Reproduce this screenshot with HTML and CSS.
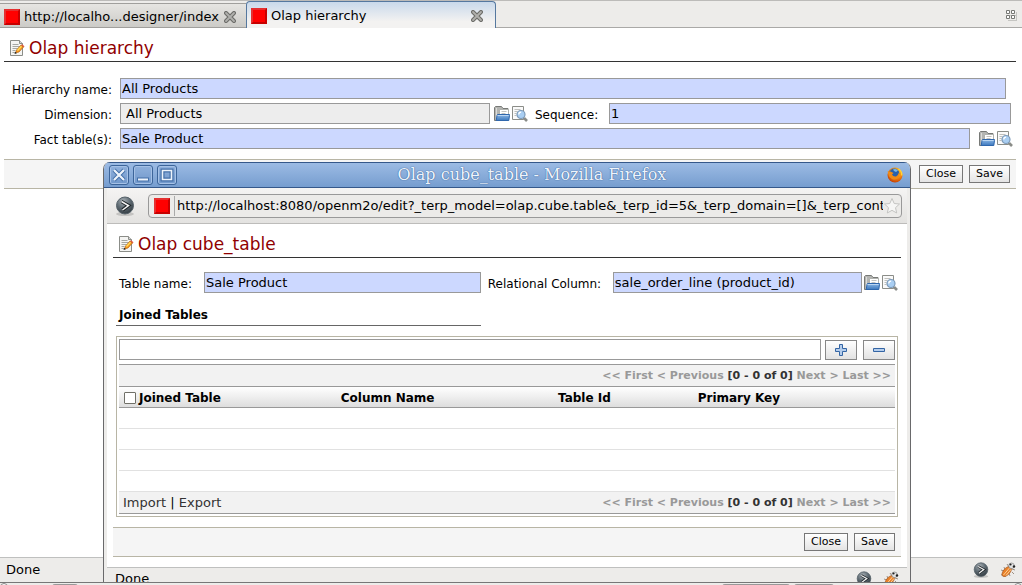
FILE: index.html
```html
<!DOCTYPE html>
<html lang="en">
<head>
<meta charset="utf-8">
<title>Olap hierarchy</title>
<link rel="stylesheet" href="styles.css">
</head>
<body>
<svg class="sprite" aria-hidden="true">
  <defs>
    <linearGradient id="gBlue" x1="0" y1="0" x2="0" y2="1"><stop offset="0" stop-color="#8db8e6"/><stop offset="1" stop-color="#3c78bd"/></linearGradient>
    <radialGradient id="gBall" cx=".4" cy=".25" r=".8"><stop offset="0" stop-color="#a8b0b5"/><stop offset=".5" stop-color="#5f6b73"/><stop offset="1" stop-color="#30383e"/></radialGradient>
    <radialGradient id="gFox" cx=".6" cy=".3" r=".8"><stop offset="0" stop-color="#ffd32a"/><stop offset=".5" stop-color="#f5870e"/><stop offset="1" stop-color="#b52c06"/></radialGradient>
  </defs>
  <symbol id="edit" viewBox="0 0 16 16">
    <path d="M1.500.5h9l3 3v12h-12z" fill="#f4f4f2" stroke="#8b8d88"/>
    <path d="M10.500.5v3h3" fill="#d6d6d3" stroke="#8b8d88"/>
    <path d="M3.500 4.500h6M3.500 6.500h7M3.500 8.500h5M3.500 10.500h3M3.500 12.500h4" stroke="#a5a7a3"/>
    <path d="M6.500 13l1-3 4.500-5 2.500 2-4.500 5z" fill="#f7941d" stroke="#a85b0b" stroke-width=".6"/>
    <path d="M8.500 10.500l4-4.200" stroke="#ffe05a" stroke-width="1.300"/>
    <path d="M12 5l1-.8 2.500 2-.8 1z" fill="#e0553a"/>
    <path d="M5.500 14l.8-2.300 1.600 1.500z" fill="#222"/>
  </symbol>
  <symbol id="folder" viewBox="0 0 16 16">
    <path d="M.5 14.500V1.500L1.500.5h6l1.500 2h5v12z" fill="#b4b5b2" stroke="#777976"/>
    <path d="M2.500 2v11" stroke="#dcdcd9"/>
    <path d="M5.500 10V3.500h9V10z" fill="#fff" stroke="#b0b2ae"/>
    <path d="M7.500 5.500h5M7.500 7.500h4" stroke="#c4c4c1"/>
    <path d="M3 9.500l.5-1h12v1l-.7 5H2.200z" fill="url(#gBlue)" stroke="#2f67ad"/>
    <path d="M3.500 9.500h11" stroke="#b9d5f2"/>
  </symbol>
  <symbol id="search" viewBox="0 0 16 16">
    <path d="M.5.5h11v13H.5z" fill="#fafafa" stroke="#8b8d88"/>
    <path d="M2.500 3.500h6M2.500 5.500h3M2.500 7.500h2M2.500 9.500h2" stroke="#bfc0bd"/>
    <path d="M12 12l3 3" stroke="#8a8c88" stroke-width="2.600"/>
    <circle cx="9" cy="8.500" r="4" fill="#a9cef2" stroke="#7d9ab8" stroke-width="1.200"/>
    <path d="M6.800 8.500q0-2.300 2.300-2.300" stroke="#fff" fill="none" stroke-width="1.300"/>
  </symbol>
  <symbol id="close" viewBox="0 0 12 12">
    <path d="M2 2l8 8M10 2l-8 8" stroke="#6b6b68" stroke-width="4" stroke-linecap="round"/>
    <path d="M2 2l8 8M10 2l-8 8" stroke="#b0b0ad" stroke-width="1.800" stroke-linecap="round"/>
  </symbol>
  <symbol id="ball" viewBox="0 0 20 20">
    <ellipse cx="10" cy="18" rx="9" ry="2" fill="#c4c3c1"/>
    <circle cx="10" cy="9.500" r="8.500" fill="url(#gBall)" stroke="#56626a"/>
    <path d="M6.500 5.500l7 4-6 4.500" fill="none" stroke="#20262a" stroke-width="3.500"/>
    <path d="M6.500 5.500l7 4-6 4.500" fill="none" stroke="#f3f4f4" stroke-width="1.500"/>
  </symbol>
  <symbol id="bug" viewBox="0 0 16 16">
    <path d="M4 5l1 3M1 8l3 1M1 13l3-1M5 15l1-2M10 14l-1-3M12 10l2 2M7 2l2 3M12 7l3 1" stroke="#8a7a6a" stroke-width=".8" fill="none"/>
    <ellipse cx="6.800" cy="9.500" rx="3.300" ry="6.200" transform="rotate(42 6.800 9.500)" fill="#e8812a" stroke="#a4521a" stroke-width=".6"/>
    <path d="M3.500 13l6-7M6 13.500l5-6" stroke="#ffd7a0" stroke-width=".9"/>
    <circle cx="11.500" cy="3.800" r="2.800" fill="#e2e3e3" stroke="#777" stroke-width=".6"/>
    <circle cx="10.500" cy="2.500" r="1.100" fill="#222"/><circle cx="14" cy="4.500" r="1.200" fill="#222"/>
  </symbol>
  <symbol id="firefox" viewBox="0 0 16 16">
    <circle cx="8" cy="8" r="7.500" fill="url(#gFox)"/>
    <circle cx="7.300" cy="6.500" r="5" fill="#2a61ab"/>
    <path d="M6 2.500q3-1.500 5 1l-2 1.500-2-1z" fill="#78b7e8"/>
    <path d="M.8 4Q2 5 3.500 4.500L6.500 6 5 7.500q1 2.500 4 2 2.500-1 2.500-4 1.500 3 .2 5Q9 13.500 5 12 .5 9 .8 4z" fill="#f08a16"/>
    <path d="M11.500 2q3.500 2 3.300 6.500" stroke="#ffd53a" stroke-width="1.400" fill="none"/>
  </symbol>
</svg>

<div class="browser">
  <nav class="tabs">
    <div class="tab tab-back"><span class="favicon"></span><span class="tab-name">http://localho...designer/index</span><button class="plain" aria-label="Close tab"><svg class="x"><use href="#close"/></svg></button></div>
    <div class="tab tab-active"><span class="favicon"></span><span class="tab-name">Olap hierarchy</span><button class="plain" aria-label="Close tab"><svg class="x"><use href="#close"/></svg></button></div>
    <button class="plain tab-list" aria-label="List tabs"><svg width="11" height="11" viewBox="0 0 11 11"><path d="M2 5.500h9M2 10.500h9M10.500 2v8" stroke="#c5c5c2"/><path d="M.5.5h3v3h-3zM5.500.5h3v3h-3zM.5 5.500h3v3h-3zM5.500 5.500h3v3h-3z" fill="#fff" stroke="#777875"/></svg></button>
  </nav>
  <main class="page">
    <h1 class="title"><svg class="icon"><use href="#edit"/></svg>Olap hierarchy</h1>
    <form class="form">
      <div class="row row-name"><label for="hname">Hierarchy name:</label><input id="hname" class="field" value="All Products"></div>
      <div class="row"><label for="dim">Dimension:</label><input id="dim" class="field readonly" value="All Products" readonly>
        <span class="tools"><button type="button" class="plain" aria-label="Open dimension"><svg class="icon"><use href="#folder"/></svg></button><button type="button" class="plain" aria-label="Search dimension"><svg class="icon"><use href="#search"/></svg></button></span>
        <label class="inner" for="seq">Sequence:</label><input id="seq" class="field seq" value="1"></div>
      <div class="row row-fact"><label for="fact">Fact table(s):</label><input id="fact" class="field" value="Sale Product">
        <span class="tools"><button type="button" class="plain" aria-label="Open fact table"><svg class="icon"><use href="#folder"/></svg></button><button type="button" class="plain" aria-label="Search fact table"><svg class="icon"><use href="#search"/></svg></button></span></div>
    </form>
    <div class="actions"><button class="btn">Close</button><button class="btn">Save</button></div>
  </main>
  <footer class="status"><span>Done</span><span class="status-icons"><svg class="icon"><use href="#ball"/></svg><svg class="icon"><use href="#bug"/></svg></span></footer>
  <div class="taskbar"><i class="knob"></i><i class="task task-a"></i><i class="task task-b"></i><i class="task task-c"></i><i class="knob"></i></div>
</div>

<section class="popup" aria-label="Olap cube_table">
  <header class="titlebar">
    <button class="win" aria-label="Close"><svg viewBox="0 0 18 18"><path d="M4 4l10 10M14 4L4 14" stroke="#436fa8" stroke-width="4"/><path d="M4 4l10 10M14 4L4 14" stroke="#edf3fb" stroke-width="2.200"/></svg></button>
    <button class="win" aria-label="Minimize"><svg viewBox="0 0 18 18"><path d="M3 11.500h12v4H3z" fill="#436fa8"/><path d="M4 13.500h10" stroke="#edf3fb" stroke-width="2"/></svg></button>
    <button class="win" aria-label="Maximize"><svg viewBox="0 0 18 18"><path d="M4.500 4.500h9v9h-9z" fill="none" stroke="#436fa8" stroke-width="4"/><path d="M4.500 4.500h9v9h-9z" fill="none" stroke="#edf3fb" stroke-width="1.600"/></svg></button>
    <h2 class="win-title">Olap cube_table - Mozilla Firefox</h2>
    <svg class="icon"><use href="#firefox"/></svg>
  </header>
  <div class="inside">
    <div class="location">
      <svg class="globe"><use href="#ball"/></svg>
      <div class="urlbox"><span class="favicon"></span><input class="url" aria-label="Address" value="http://localhost:8080/openm2o/edit?_terp_model=olap.cube.table&amp;_terp_id=5&amp;_terp_domain=[]&amp;_terp_cont">
        <button class="plain" aria-label="Bookmark"><svg width="18" height="18" viewBox="0 0 18 18"><path d="M9 1.500l2.200 5 5.300.5-4 3.700 1.200 5.300L9 13.300 4.300 16l1.200-5.300-4-3.700 5.300-.5z" fill="#f6f6f5" stroke="#c4c4c2"/></svg></button></div>
    </div>
    <div class="dialog">
      <h1 class="title"><svg class="icon"><use href="#edit"/></svg>Olap cube_table</h1>
      <form class="pair">
        <label class="for-name" for="tname">Table name:</label><input id="tname" class="field" value="Sale Product">
        <label class="for-rel" for="rel">Relational Column:</label><input id="rel" class="field rel" value="sale_order_line (product_id)">
        <span class="tools"><button type="button" class="plain" aria-label="Open column"><svg class="icon"><use href="#folder"/></svg></button><button type="button" class="plain" aria-label="Search column"><svg class="icon"><use href="#search"/></svg></button></span>
      </form>
      <h3 class="section">Joined Tables</h3>
      <div class="listbox">
        <div class="adder"><input class="field blank" aria-label="Joined table">
          <button class="sq" aria-label="Add"><svg width="14" height="14" viewBox="0 0 14 14"><path d="M5.500 1.500h3v4h4v3h-4v4h-3v-4h-4v-3h4z" fill="#b4cdec" stroke="#3465a4"/></svg></button>
          <button class="sq" aria-label="Remove"><svg width="14" height="14" viewBox="0 0 14 14"><path d="M1.500 5.500h11v3h-11z" fill="#b4cdec" stroke="#3465a4"/></svg></button></div>
        <div class="pager pager-top"><span class="pages">&lt;&lt; First &lt; Previous <b>[0 - 0 of 0]</b> Next &gt; Last &gt;&gt;</span></div>
        <table class="grid">
          <colgroup><col class="c-check"><col class="c-join"><col class="c-col"><col class="c-id"><col></colgroup>
          <thead><tr><th><input type="checkbox" class="check" aria-label="Select all"></th><th>Joined Table</th><th>Column Name</th><th>Table Id</th><th>Primary Key</th></tr></thead>
          <tbody><tr><td colspan="5"></td></tr><tr><td colspan="5"></td></tr><tr><td colspan="5"></td></tr><tr><td colspan="5"></td></tr></tbody>
        </table>
        <div class="pager"><span class="links"><a href="#">Import</a> | <a href="#">Export</a></span><span class="pages">&lt;&lt; First &lt; Previous <b>[0 - 0 of 0]</b> Next &gt; Last &gt;&gt;</span></div>
      </div>
      <div class="actions"><button class="btn">Close</button><button class="btn">Save</button></div>
    </div>
    <footer class="status"><span>Done</span><span class="status-icons"><svg class="icon"><use href="#ball"/></svg><svg class="icon"><use href="#bug"/></svg></span></footer>
  </div>
</section>
</body>
</html>
```
FILE: styles.css
```css
* { box-sizing: border-box; }
html, body { margin: 0; }
body { position: relative; overflow: hidden; background: #fff; color: #000; font: 13px/18px "DejaVu Sans", sans-serif; }
button, input { margin: 0; font: inherit; color: inherit; }
svg { display: block; }
.sprite { position: absolute; width: 0; height: 0; }
.icon { width: 16px; height: 16px; flex: none; }
.plain { padding: 0; border: 0; background: none; }

.browser { display: flex; flex-direction: column; min-height: 100vh; }
.tabs { display: flex; align-items: flex-end; height: 28px; background: #edecea; border-top: 1px solid #bcbbb9; box-shadow: inset 0 -1px #aaa9a7; }
.tab { display: flex; align-items: center; gap: 4px; padding: 2px 12px 0 4px; }
.tab-back { width: 246px; height: 25px; padding-right: 10px; background: linear-gradient(#e6e5e2, #cccbc7); border: 1px solid #a09f9c; border-width: 1px 0; }
.tab-active { width: 250px; height: 27px; background: linear-gradient(#c9d9eb, #f3f2f1 75%); border: 1px solid #55789f; border-bottom: 0; border-radius: 4px 4px 0 0; }
.tab-name { flex: 1; white-space: nowrap; }
.x { width: 12px; height: 12px; }
.favicon { flex: none; width: 16px; height: 16px; background: #f00; border: 2px solid #c80000; border-top-color: #e53030; border-left-color: #e53030; }
.tab-list { margin: 0 5px 7px auto; }

.page { flex: 1; padding: 9px 6px 0 4px; }
.title { display: flex; align-items: center; gap: 4px; margin: 0; padding: 0 4px 2px 5px; height: 25px; border-bottom: 1px solid #333; color: #900000; font-size: 17px; font-weight: 400; }
.form { display: flex; flex-direction: column; gap: 4px; padding: 16px 0 10px 4px; }
.row { display: flex; align-items: center; padding-right: 5px; }
.row-name { padding-right: 10px; }
.row-fact { padding-right: 3px; }
.row > label:first-child { width: 104px; margin-right: 8px; text-align: right; }
label { flex: none; padding-top: 2px; font-size: 12px; white-space: nowrap; }
.field { flex: 1; min-width: 0; height: 21px; padding: 0 1px 1px; border: 1px solid #999; background: #ccd8ff; }
.readonly { flex: 362; padding-left: 5px; background: #ededed; }
.seq { flex: 398; }
.tools { display: flex; gap: 2px; margin-left: 4px; flex: none; }
.row-fact .tools { margin-left: 9px; }
.inner { width: 66px; margin: 0 8px 0 7px; }
.actions { display: flex; align-items: center; justify-content: flex-end; gap: 6px; height: 30px; padding: 0 6px; background: #f5f5f5; border: 1px solid #b8b5a5; border-width: 1px 0; }
.btn { height: 18px; padding: 0 6px; border: 1px solid #777; background: linear-gradient(#fff, #e4e4e4); font-size: 11px; line-height: 16px; }

.status { display: flex; align-items: center; justify-content: space-between; height: 25px; padding: 0 6px; background: #edecea; border-top: 1px solid #bfc0bf; }
.status-icons { display: flex; gap: 11px; }
.taskbar { display: flex; height: 3px; overflow: hidden; background: #edecea; border-top: 1px solid #777; }
.knob { width: 8px; height: 8px; border: 1px solid #888; border-radius: 4px; background: #fff; }
.task { height: 8px; border-radius: 3px; background: #999; margin-top: 1px; }
.task-a { width: 26px; margin-left: 44px; }
.task-b { width: 68px; margin-left: auto; }
.task-c { width: 40px; margin: 1px 180px 0 4px; }

/* Popup window floating above the main page */
.popup { position: absolute; top: 162px; left: 103px; right: 111px; bottom: 3px; overflow: hidden; display: flex; flex-direction: column; border: 1px solid #69696b; border-width: 0 1px; border-radius: 7px 7px 0 0; background: #edecea; }
.titlebar { flex: none; display: flex; align-items: center; gap: 4px; height: 26px; padding: 0 7px 0 5px; border: 1px solid #35588a; border-width: 1px 0; background: linear-gradient(#9cbbe4, #769dcf); }
.win { flex: none; width: 20px; height: 20px; padding: 0; border: 1px solid #3d659a; border-radius: 3px; background: linear-gradient(#8fb0dc, #7198cb); box-shadow: inset 0 0 0 1px #a5c1e6; }
.win-title { flex: 1; margin: 0; color: #eef4fc; font: 400 16px/24px "DejaVu Serif", serif; text-align: center; text-shadow: 0 0 1px #3c659c, 0 0 1px #3c659c; white-space: nowrap; }
.inside { flex: 1; margin: 0 3px; background: #fff; }
.location { display: flex; align-items: center; gap: 13px; height: 36px; padding: 0 5px 0 8px; background: linear-gradient(#f5f4f3, #e3e2e0); border-bottom: 1px solid #bdbcba; }
.globe { width: 20px; height: 20px; flex: none; }
.urlbox { flex: 1; min-width: 0; display: flex; align-items: center; height: 24px; padding-left: 5px; border: 1px solid #999; border-radius: 4px; background: #ecebe9; }
.url { flex: 1; min-width: 0; height: 20px; margin-left: 4px; padding: 0 0 0 2px; border: 0; border-left: 1px solid #aaa; background: none; }
.dialog { padding: 9px 6px 10px; }
.pair { display: flex; align-items: center; padding: 14px 3px 0 6px; }
.pair label { margin-right: 8px; }
.for-name { width: 77px; }
.for-rel { width: 117px; }
.pair .field { flex: 277; }
.pair .field + label { margin-left: 7px; }
.pair .field.rel { flex: 249; }
.pair .tools { margin-left: 2px; }
.section { width: 365px; height: 23px; margin: 10px 0 10px 3px; padding: 3px; border-bottom: 1px solid #666; font-size: 12px; }
.listbox { margin: 0 3px 10px; padding: 2px; border: 1px solid #b8b5a5; }
.adder { display: flex; align-items: flex-end; padding-bottom: 4px; }
.blank { background: #fff; }
.sq { display: flex; align-items: center; justify-content: center; width: 32px; height: 20px; margin-left: 4px; padding: 0; border: 1px solid #888; background: linear-gradient(#fff, #e2e2e2); }
.sq + .sq { margin-left: 6px; }
.pager { display: flex; align-items: center; height: 22px; padding: 1px 4px 0; background: #f2f2f2; border-bottom: 1px solid #999; }
.pager-top { height: 23px; border-top: 1px solid #999; }
.pages { margin-left: auto; color: #999; font-size: 11px; font-weight: 700; }
.pages b { color: #333; }
.links a { color: #333; text-decoration: none; }
.grid { width: 100%; table-layout: fixed; border-collapse: separate; border-spacing: 0; }
.grid tr { height: 21px; }
.grid thead tr { background: linear-gradient(#fff, #dcdcdc); }
.grid th { padding: 1px 0 0; border-bottom: 1px solid #999; font-size: 12px; text-align: left; }
.grid td { padding: 0; border-bottom: 1px solid #e1e1e1; }
.c-check { width: 20px; }
.c-join { width: 26%; }
.c-col { width: 28%; }
.c-id { width: 18%; }
.check { appearance: none; display: block; width: 12px; height: 12px; margin-left: 5px; border: 1px solid #707068; border-radius: 1px; background: #fff; }
.inside .status { height: 22px; padding: 0 8px; }
```
